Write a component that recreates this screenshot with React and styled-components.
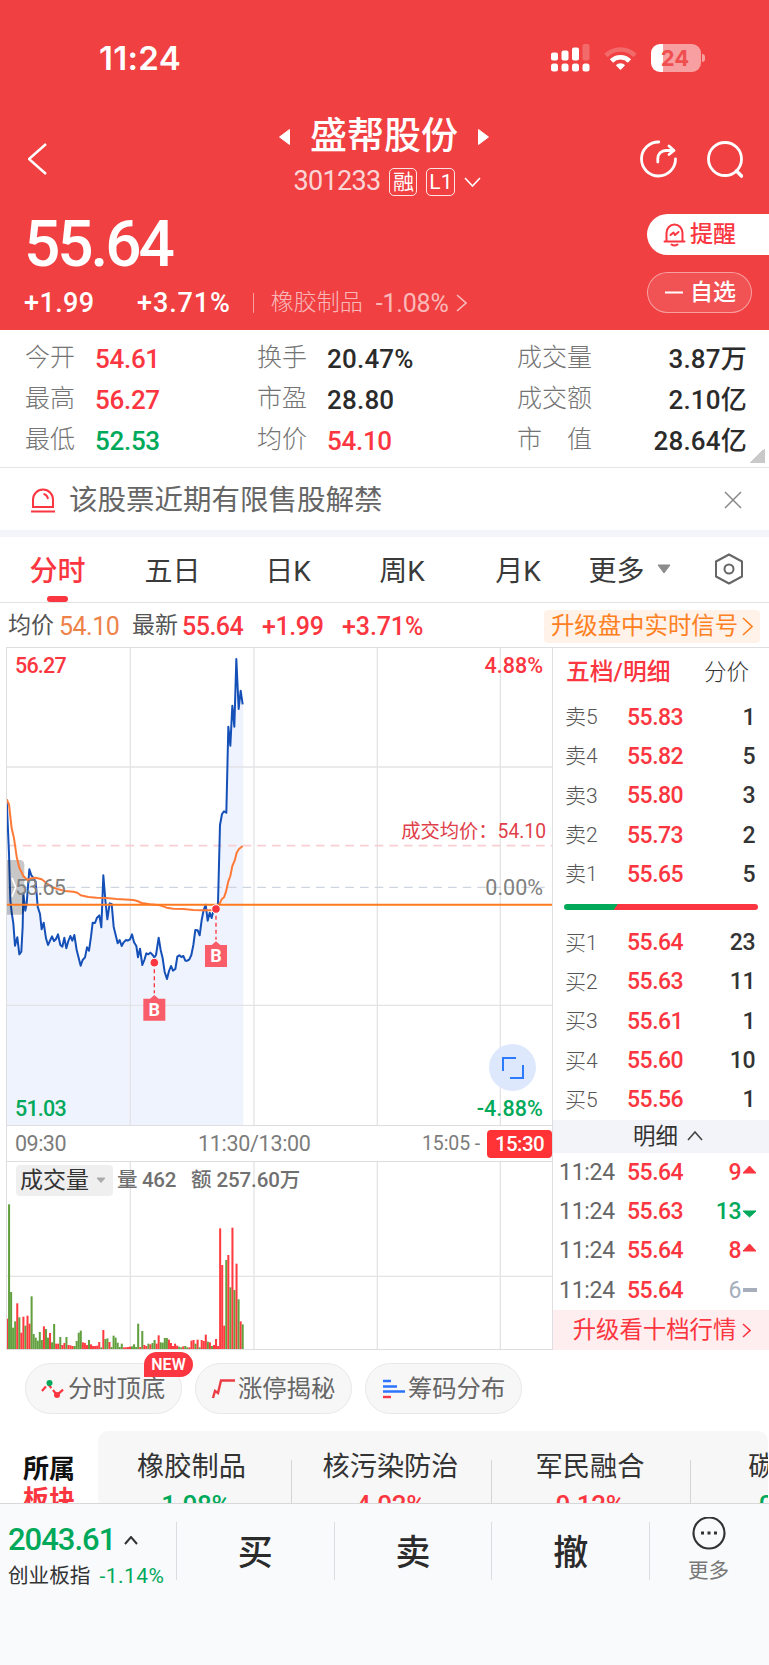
import React from "react";
import styled, { createGlobalStyle } from "styled-components";

const RED = "#fb3640";
const GREEN = "#00a95a";

const GlobalStyle = createGlobalStyle`
  * { box-sizing: border-box; }
  body {
    margin: 0;
    background: #fff;
    font-family: Roboto, "Noto Sans CJK SC", sans-serif;
    color: #333;
    overflow: hidden;
  }
  svg { display: block; flex: none; }
`;

const Page = styled.div`
  width: 769px;
  height: 1665px;
  display: flex;
  flex-direction: column;
  overflow: hidden;
`;

const Text = styled.span`
  display: block;
  flex: none;
  white-space: nowrap;
  font-size: ${(p) => p.$size || 23}px;
  line-height: ${(p) => p.$lh || Math.round((p.$size || 23) * 1.3)}px;
  font-weight: ${(p) => p.$weight || 400};
  letter-spacing: ${(p) => p.$ls || 0}px;
  color: ${(p) => p.$color || "inherit"};
  width: ${(p) => (p.$w ? p.$w + "px" : "auto")};
  text-align: ${(p) => p.$align || "left"};
`;

/* header */

const Header = styled.header`
  height: 330px;
  flex: none;
  background: #f04042;
  color: #fff;
`;

const StatusBar = styled.div`
  height: 115px;
  display: flex;
  justify-content: space-between;
  align-items: center;
  padding: 0 64px 0 99px;
`;

const Clock = styled.span`
  font-family: Inter, sans-serif;
  font-size: 33px;
  font-weight: 600;
  letter-spacing: 0.3px;
`;

const StatusIcons = styled.div`
  display: flex;
  align-items: center;
  gap: 14px;
`;

const Battery = styled.div`
  display: flex;
  align-items: center;
  justify-content: center;
  width: 50px;
  height: 28px;
  border-radius: 9px;
  background: linear-gradient(90deg, #fff 12px, rgba(255, 255, 255, 0.5) 12px);
  font-family: Inter, sans-serif;
  font-size: 22px;
  font-weight: 700;
  color: #f04f50;
  padding-right: 2px;
`;

const BatteryWrap = styled.div`
  display: flex;
  align-items: center;
  gap: 1px;
  &::after {
    content: "";
    width: 3px;
    height: 8px;
    border-radius: 0 3px 3px 0;
    background: rgba(255, 255, 255, 0.5);
  }
`;

const NavBar = styled.div`
  height: 87px;
  display: grid;
  grid-template-columns: 130px 1fr 130px;
  grid-template-rows: 87px;
  padding: 0 26px 0 28px;
  align-items: center;
`;

const Title = styled.div`
  display: flex;
  flex-direction: column;
  align-items: center;
  padding: 2px 3px 0 0;
`;

const TitleRow = styled.div`
  display: flex;
  align-items: center;
  height: 44px;
  gap: 19px;
`;

const CodeRow = styled.div`
  display: flex;
  align-items: center;
  height: 45px;
  gap: 9px;
  padding-left: 7px;
`;

const Tag = styled.span`
  display: flex;
  align-items: center;
  justify-content: center;
  width: ${(p) => p.$w}px;
  height: 28px;
  border: 1px solid rgba(255, 255, 255, 0.85);
  border-radius: 5px;
  font-size: ${(p) => p.$size}px;
  line-height: 26px;
`;

const NavActions = styled.div`
  display: flex;
  justify-content: flex-end;
  gap: 30px;
`;

const Quote = styled.div`
  display: flex;
  justify-content: space-between;
  height: 128px;
`;

const QuoteLeft = styled.div`
  padding: 8px 0 0 24px;
`;

const ChangeRow = styled.div`
  display: flex;
  align-items: center;
  height: 46px;
`;

const Separator = styled.i`
  width: 1px;
  height: 20px;
  background: rgba(255, 255, 255, 0.5);
  margin: 0 17px 0 22px;
`;

const QuoteActions = styled.div`
  display: flex;
  flex-direction: column;
  gap: 17px;
  padding-top: 12px;
`;

const RemindButton = styled.button`
  display: flex;
  align-items: center;
  width: 122px;
  height: 41px;
  padding: 0 0 0 16px;
  gap: 4px;
  border: 0;
  border-radius: 21px 0 0 21px;
  background: #fff;
  color: ${RED};
  font: 500 23px/30px Roboto, "Noto Sans CJK SC", sans-serif;
`;

const WatchButton = styled(RemindButton)`
  width: 105px;
  padding-left: 17px;
  gap: 7px;
  border: 1px solid rgba(255, 255, 255, 0.45);
  border-radius: 21px;
  background: rgba(255, 255, 255, 0.1);
  color: #fff;
`;

/* key figures */

const Stats = styled.section`
  display: grid;
  grid-template-columns: 232px 260px 1fr;
  grid-template-rows: repeat(3, 41px);
  position: relative;
  flex: none;
  height: 138px;
  padding: 8px 22px 0 25px;
  border-bottom: 1px solid #e6e6ea;
`;

const Stat = styled.div`
  display: flex;
  align-items: center;
  justify-content: ${(p) => (p.$spread ? "space-between" : "flex-start")};
`;

const StatLabel = styled.span`
  display: flex;
  justify-content: space-between;
  width: ${(p) => (p.$wide ? 75 : 70)}px;
  padding-bottom: 1px;
  font-size: 25px;
  line-height: 32px;
  font-weight: 300;
  color: #747474;
`;

const Corner = styled.i`
  position: absolute;
  right: 4px;
  bottom: 4px;
  width: 15px;
  height: 15px;
  background: linear-gradient(135deg, transparent 50%, #c9c9c9 50%);
`;

const Notice = styled.section`
  display: flex;
  align-items: center;
  flex: none;
  height: 69px;
  border-bottom: 7px solid #f3f5fa;
  padding: 2px 27px 0 31px;
  gap: 14px;
  > :last-child { margin-left: auto; }
`;

const Tabs = styled.nav`
  display: flex;
  flex: none;
  height: 66px;
  border-bottom: 1px solid #e3e3e3;
  padding-left: 8px;
`;

const Tab = styled.div`
  position: relative;
  display: flex;
  align-items: center;
  justify-content: center;
  width: ${(p) => p.$w}px;
  padding-bottom: 2px;
  gap: 12px;
  font-size: 28px;
  font-weight: ${(p) => (p.$active ? 500 : 400)};
  color: ${(p) => (p.$active ? RED : "#3a3a3a")};
  &::after {
    content: "";
    display: ${(p) => (p.$active ? "block" : "none")};
    position: absolute;
    bottom: 0;
    width: 21px;
    height: 6px;
    border-radius: 3px;
    background: ${RED};
  }
`;

const Summary = styled.div`
  display: flex;
  align-items: center;
  flex: none;
  height: 44px;
  padding: 2px 9px 0 8px;
`;

const Upgrade = styled.div`
  display: flex;
  align-items: center;
  justify-content: center;
  gap: 4px;
  margin-left: auto;
  width: 216px;
  height: 33px;
  border-radius: 4px;
  background: #fff2e8;
`;

/* chart + order book */

const Board = styled.section`
  display: flex;
  flex: none;
  height: 703px;
`;

const Charts = styled.div`
  width: 546px;
  margin-left: 6px;
  border: solid #dedee0;
  border-width: 1px 0 1px 1px;
`;

const PriceChart = styled.div`
  position: relative;
  height: 478px;
  border-bottom: 1px solid #dedee0;
`;

const ChartLabel = styled(Text)`
  position: absolute;
  top: ${(p) => p.$top}px;
  left: ${(p) => (p.$left !== undefined ? p.$left + "px" : "auto")};
  right: ${(p) => (p.$right !== undefined ? p.$right + "px" : "auto")};
`;

const ExpandButton = styled.div`
  position: absolute;
  right: 16px;
  top: 396px;
  display: grid;
  place-items: center;
  width: 47px;
  height: 47px;
  border-radius: 50%;
  background: #dee8fd;
`;

const TimeAxis = styled.div`
  display: flex;
  align-items: center;
  height: 36px;
  border-bottom: 1px solid #dedee0;
  padding-left: 8px;
  color: #7c7c7c;
`;

const TimeChip = styled.span`
  width: 65px;
  height: 28px;
  margin-left: auto;
  border-radius: 4px;
  background: #ff3236;
  color: #fff;
  font-size: 20.5px;
  line-height: 28px;
  letter-spacing: -0.6px;
  font-weight: 500;
  text-align: center;
`;

const VolumeChart = styled.div`
  position: relative;
  height: 187px;
`;

const VolumeLegend = styled.div`
  position: absolute;
  left: 9px;
  top: 3px;
  display: flex;
  align-items: center;
  color: #707070;
`;

const IndicatorSelect = styled.div`
  display: flex;
  align-items: center;
  gap: 7px;
  width: 97px;
  height: 31px;
  padding-left: 4px;
  margin-right: 4px;
  border-radius: 4px;
  background: #efefef;
`;

const Book = styled.aside`
  flex: 1;
  border: solid #dedee0;
  border-width: 1px 0 0 1px;
`;

const BookTabs = styled.div`
  display: flex;
  align-items: center;
  justify-content: space-between;
  height: 50px;
  padding: 0 20px 2px 13px;
`;

const Level = styled.div`
  display: flex;
  align-items: center;
  height: 39.3px;
  padding: 0 14px 0 12px;
  > :last-child { margin-left: auto; }
`;

const Trade = styled(Level)`
  padding: 0 12px 0 6px;
`;

const TradeVolume = styled.div`
  display: flex;
  align-items: center;
  gap: 1px;
`;

const Pressure = styled.div`
  height: 6px;
  margin: 10px 11px 13px;
  border-radius: 3px;
  background: linear-gradient(125deg, ${GREEN} 27%, ${RED} 27.3%);
`;

const Band = styled.div`
  display: flex;
  align-items: center;
  justify-content: center;
  gap: ${(p) => p.$gap}px;
  height: ${(p) => p.$h}px;
  padding-left: ${(p) => p.$shift || 0}px;
  background: ${(p) => p.$bg};
`;

/* below the chart */

const Tools = styled.section`
  display: flex;
  flex: none;
  gap: 13px;
  height: 81px;
  padding: 13px 0 0 25px;
`;

const Pill = styled.div`
  position: relative;
  display: flex;
  align-items: center;
  gap: 2px;
  width: 157px;
  height: 51px;
  padding-left: 15px;
  border: 1px solid #e8e8e8;
  border-radius: 26px;
  background: #f7f7f7;
`;

const NewBadge = styled.span`
  position: absolute;
  left: 118px;
  top: -12px;
  width: 49px;
  height: 25px;
  border-radius: 13px 13px 13px 0;
  background: ${RED};
  color: #fff;
  font-size: 16px;
  font-weight: 600;
  line-height: 26px;
  text-align: center;
`;

const Sectors = styled.section`
  display: flex;
  flex: none;
  height: 72px;
  overflow: hidden;
`;

const SectorTitle = styled.div`
  width: 98px;
  padding: 23px 0 0 23px;
`;

const SectorCard = styled.div`
  display: flex;
  width: 670px;
  height: 120px;
  overflow: hidden;
  border-radius: 10px;
  background: #f7f7f7;
`;

const Sector = styled.div`
  display: flex;
  flex-direction: column;
  align-items: center;
  flex: none;
  width: ${(p) => p.$w}px;
  padding: 18px 3px 0 0;
  background: linear-gradient(#d5d5d5, #d5d5d5) right 29px / 1px 60px no-repeat;
  &:first-child { padding-right: 7px; }
`;

const BottomBar = styled.footer`
  display: flex;
  flex: none;
  height: 163px;
  padding-top: 18px;
  border-top: 1px solid #d8d8da;
  background: #f9fafc;
`;

const IndexBox = styled.div`
  width: 176px;
  padding-left: 8px;
`;

const IndexLine = styled.div`
  display: flex;
  align-items: center;
  height: ${(p) => p.$h}px;
  gap: ${(p) => p.$gap}px;
`;

const Action = styled.div`
  display: flex;
  flex-direction: column;
  align-items: center;
  width: ${(p) => p.$w || 157.7}px;
  height: 58px;
  border-left: 1px solid #dcdde0;
  font-size: 35px;
  line-height: 64px;
  font-weight: 500;
  color: #2b2b2b;
  svg { margin-top: -5px; }
`;

const stats = [
  ["今开", "54.61", RED], ["换手", "20.47%"], ["成交量", "3.87万"],
  ["最高", "56.27", RED], ["市盈", "28.80"], ["成交额", "2.10亿"],
  ["最低", "52.53", GREEN], ["均价", "54.10", RED], ["市值", "28.64亿"],
];

const asks = [["卖5", "55.83", 1], ["卖4", "55.82", 5], ["卖3", "55.80", 3], ["卖2", "55.73", 2], ["卖1", "55.65", 5]];
const bids = [["买1", "55.64", 23], ["买2", "55.63", 11], ["买3", "55.61", 1], ["买4", "55.60", 10], ["买5", "55.56", 1]];
const trades = [["55.64", 9, "up"], ["55.63", 13, "down"], ["55.64", 8, "up"], ["55.64", 6, "flat"]];
const tradeColor = { up: RED, down: GREEN, flat: "#a5aeba" };

const sectors = [
  { name: "橡胶制品", change: "-1.08%", color: GREEN, w: 194 },
  { name: "核污染防治", change: "4.02%", color: RED, w: 200 },
  { name: "军民融合", change: "0.12%", color: RED, w: 199 },
  { name: "碳中和", change: "-0.35%", color: GREEN, w: 199 },
];

// chart coordinates are thirds of a pixel
const priceLine =
  "20,478 27,640 31,780 35,817 40,850 45,917 52,892 58,943 64,935 68,860 70,760 76,812 80,790 88,688 94,706 99,712 107,725 113,800 120,822 125,868 131,848 138,895 144,915 156,889 162,903 168,897 174,883 181,915 187,920 193,893 199,925 205,903 211,888 217,902 223,885 230,930 242,977 248,960 255,952 261,922 267,932 273,890 278,848 285,849 291,833 298,826 304,862 310,706 316,780 322,838 329,790 335,792 341,860 347,885 353,910 359,900 365,918 371,907 378,900 383,902 390,898 396,883 402,907 409,918 414,952 420,926 427,975 433,960 439,940 445,943 451,938 458,945 463,952 468,945 476,893 482,930 488,955 494,996 501,1017 507,993 513,978 519,992 526,987 532,950 538,946 544,951 550,948 556,962 562,962 568,958 574,945 580,915 586,870 593,871 599,886 605,840 611,810 617,794 623,842 629,818 635,834 641,808 648,806 654,790 660,555 666,522 672,514 679,518 685,260 691,317 697,197 703,260 709,57 716,207 722,152 728,193";
const avgLine =
  "20,478 27,493 35,565 42,595 50,650 58,683 70,708 82,720 94,715 107,713 125,718 140,730 155,741 175,748 195,753 220,755 232,758 242,766 265,771 290,773 320,774 350,777 400,780 412,783 425,789 450,793 480,796 500,803 520,806 550,807 580,810 605,811 640,811 655,800 665,778 672,772 678,755 685,724 691,708 697,678 704,662 710,638 717,627 728,618";

const volumes =
  "r91 g434 g171 g64 g83 r137 g95 r49 r97 g70 r100 r76 g158 g45 g34 g25 g51 g27 r68 g60 g34 r48 g20 g75 r16 r16 g36 r12 r18 g36 r12 r11 r9 g9 g24 g49 g55 r20 r18 r12 g27 r14 r9 r9 r10 r21 g5 r57 g30 g32 r21 g6 g40 g34 g19 g6 g16 r5 r5 r6 r7 g8 g14 g6 g76 r6 g54 r12 r9 g16 r14 g18 g27 r16 r41 g20 g19 g33 g33 r28 r18 r9 r16 r10 g7 g5 r8 g9 g5 r5 r25 r27 g16 r28 g5 r27 r24 r43 g22 r20 g9 r12 r30 r9 r362 r252 r70 g267 r282 g185 r364 g177 r256 g149 r83 g74".split(" ");

function Chevron({ dir = "right", w = 10, h = 17, color = "#fff", stroke = 1.6 }) {
  const shapes = {
    right: `M1 1L${w - 1} ${h / 2}L1 ${h - 1}`,
    left: `M${w - 1} 1L1 ${h / 2}L${w - 1} ${h - 1}`,
    down: `M1 1L${w / 2} ${h - 1}L${w - 1} 1`,
    up: `M1 ${h - 1}L${w / 2} 1L${w - 1} ${h - 1}`,
  };
  return (
    <svg width={w} height={h} fill="none" stroke={color} strokeWidth={stroke}>
      <path d={shapes[dir]} />
    </svg>
  );
}

function Triangle({ points, w, h, color }) {
  return (
    <svg width={w} height={h} fill={color} stroke={color} strokeLinejoin="round">
      <polygon points={points} />
    </svg>
  );
}

function BuyMarker({ x, y }) {
  return (
    <g>
      <line x1={x} y1={y + 20} x2={x} y2={y + 92} stroke={RED} strokeWidth="4" strokeDasharray="12 9" />
      <circle cx={x} cy={y} r="13" fill={RED} stroke="#fff" strokeWidth="3" />
      <path d={`M${x - 33} ${y + 108}h20l13-11 13 11h20v66h-66z`} fill="#f85d69" />
      <text x={x} y={y + 160} fill="#fff" fontSize="54" fontWeight="700" textAnchor="middle">B</text>
    </g>
  );
}

function PriceSvg() {
  return (
    <svg width="545" height="477" viewBox="21 24 1635 1431" fill="none">
      <polygon points={`20,1460 ${priceLine} 730,193 730,1460`} fill="#eff3fe" />
      <path d="M391 0V1460M762 0V1460M1132 0V1460M1501 0V1460M0 381H1660M0 1096H1660" stroke="#e4e4e7" strokeWidth="4" />
      <path d="M24 617H1660" stroke="#f8cfd2" strokeWidth="5" strokeDasharray="26 18" />
      <path d="M24 742H1648" stroke="#cdd6e0" strokeWidth="4" strokeDasharray="26 18" />
      <polyline points={priceLine} stroke="#1550b8" strokeWidth="6" strokeLinejoin="round" />
      <path d="M20 660H60a13 13 0 0 1 13 13V811a13 13 0 0 1-13 13H20z" fill="#000" opacity=".22" />
      <path d="M36 714L47 742L36 770" stroke="#fff" strokeWidth="5" />
      <polyline points={avgLine} stroke="#ff7a37" strokeWidth="6" strokeLinejoin="round" />
      <path d="M20 794H1660" stroke="#ff7a1e" strokeWidth="6" />
      <BuyMarker x={648} y={807} />
      <BuyMarker x={463} y={968} />
    </svg>
  );
}

function VolumeSvg() {
  return (
    <svg width="545" height="187" viewBox="21 127 1635 561" fill="none">
      <path d="M391 0V700M762 0V700M1132 0V700M1501 0V700M0 470H1660" stroke="#e4e4e7" strokeWidth="4" />
      {volumes.map((v, i) => {
        const h = Number(v.slice(1));
        return <rect key={i} x={18 + i * 6.148} y={688 - h} width="6.1" height={h} fill={v[0] === "r" ? "#ff3b3f" : "#62a03f"} />;
      })}
    </svg>
  );
}

function TradeMark({ dir }) {
  if (dir === "up") return <Triangle w={15} h={16} color={RED} points="1,8 7.5,1 14,8" />;
  if (dir === "down") return <Triangle w={15} h={16} color={GREEN} points="1,7 7.5,13 14,7" />;
  return <svg width="15" height="16"><rect x="1" y="5" width="14" height="4" fill="#a5aeba" /></svg>;
}

function LevelRow({ row }) {
  return (
    <Level>
      <Text $size={21} $w={62} $weight={300} $color="#555">{row[0]}</Text>
      <Text $size={23} $weight={500} $ls={-0.5} $color={RED}>{row[1]}</Text>
      <Text $size={23} $weight={500} $ls={-0.5}>{row[2]}</Text>
    </Level>
  );
}

export default function App() {
  return (
    <Page>
      <GlobalStyle />
      <Header>
        <StatusBar>
          <Clock>11:24</Clock>
          <StatusIcons>
            <svg width="39" height="28" fill="#fff">
              <rect x="0" y="8.500" width="7" height="8" rx="2" />
              <rect x="10.500" y="6.500" width="7" height="10" rx="2" />
              <rect x="21" y="3.500" width="7" height="13" rx="2" />
              <rect x="31.500" y="0" width="7" height="16.500" rx="2" opacity=".22" />
              <rect x="0" y="19.500" width="7" height="8" rx="2.500" />
              <rect x="10.500" y="19.500" width="7" height="8" rx="2.500" />
              <rect x="21" y="19.500" width="7" height="8" rx="2.500" />
              <rect x="31.500" y="19.500" width="7" height="8" rx="2.500" />
            </svg>
            <svg width="33" height="26" fill="none" stroke="#fff" strokeWidth="4.600">
              <path d="M2 10.500A20.500 20.500 0 0 1 31 10.500" opacity=".22" />
              <path d="M7.500 16A12.800 12.800 0 0 1 25.500 16" />
              <path d="M16.500 25L11.800 20.300A6.600 6.600 0 0 1 21.200 20.300Z" fill="#fff" stroke="none" />
            </svg>
            <BatteryWrap>
              <Battery>24</Battery>
            </BatteryWrap>
          </StatusIcons>
        </StatusBar>
        <NavBar>
          <Chevron dir="left" w={19} h={32} stroke={2.4} />
          <Title>
            <TitleRow>
              <Triangle w={13} h={18} color="#fff" points="1.500,9 11.500,1.500 11.500,16.500" />
              <Text $size={37} $lh={44} $weight={500}>盛帮股份</Text>
              <Triangle w={13} h={18} color="#fff" points="11.500,9 1.500,1.500 1.500,16.500" />
            </TitleRow>
            <CodeRow>
              <Text $size={27} $ls={-0.7} $color="rgba(255,255,255,.8)">301233</Text>
              <Tag $w={28} $size={21}>融</Tag>
              <Tag $w={29} $size={21}>L1</Tag>
              <Chevron dir="down" w={17} h={10} />
            </CodeRow>
          </Title>
          <NavActions>
            <svg width="37" height="38" fill="none" stroke="#fff" strokeWidth="2.800" strokeLinecap="round" strokeLinejoin="round">
              <path d="M18.800 2A17 17 0 1 0 35.500 19" />
              <path d="M17.800 22V18.500A8 8 0 0 1 25.800 10.500H33M29 6L34 10.500L29 14.500" />
            </svg>
            <svg width="36" height="38" fill="none" stroke="#fff" strokeWidth="2.800" strokeLinecap="round">
              <circle cx="18" cy="19" r="16.500" />
              <path d="M29.500 31L34.500 36" strokeWidth="3.600" />
            </svg>
          </NavActions>
        </NavBar>
        <Quote>
          <QuoteLeft>
            <Text $size={64} $lh={70} $weight={500} $ls={-3.1}>55.64</Text>
            <ChangeRow>
              <Text $size={27} $weight={500} $w={113} $ls={0.4}>+1.99</Text>
              <Text $size={27} $weight={500} $ls={0.9}>+3.71%</Text>
              <Separator />
              <Text $size={23} $w={105} $weight={300} $color="rgba(255,255,255,.65)">橡胶制品</Text>
              <Text $size={25} $ls={-0.2} $color="rgba(255,255,255,.65)">-1.08%</Text>
              <Text $w={7} />
              <Chevron w={11} h={18} color="rgba(255,255,255,.65)" />
            </ChangeRow>
          </QuoteLeft>
          <QuoteActions>
            <RemindButton>
              <svg width="23" height="25" fill="none" stroke={RED} strokeWidth="2" strokeLinecap="round" strokeLinejoin="round">
                <path d="M1.500 19.500H21.500M3.500 19V11A8 8.500 0 0 1 19.500 11V19M8.500 22.500Q11.500 24.500 14.500 22.500" />
                <path d="M7.500 13L10.500 10.500L12 13L15.500 10" />
              </svg>
              提醒
            </RemindButton>
            <WatchButton>
              <svg width="18" height="3" fill="#fff"><rect y=".5" width="18" height="2" /></svg>
              自选
            </WatchButton>
          </QuoteActions>
        </Quote>
      </Header>

      <Stats>
        {stats.map(([label, value, color], i) => (
          <Stat key={label} $spread={i % 3 === 2}>
            <StatLabel $wide={i % 3 === 2}>
              {label === "市值" ? label.split("").map((c) => <span key={c}>{c}</span>) : label}
            </StatLabel>
            <Text $size={26} $weight={500} $ls={color ? -0.3 : 0.2} $color={color || "#2b2b2b"}>{value}</Text>
          </Stat>
        ))}
        <Corner />
      </Stats>

      <Notice>
        <svg width="24" height="25" fill="none" stroke={RED} strokeWidth="2">
          <path d="M2 19V11.500A10 10 0 0 1 22 11.500V19ZM0 23.500H24M12.500 6A6 6 0 0 1 17 11" />
        </svg>
        <Text $size={28.500} $color="#666">该股票近期有限售股解禁</Text>
        <svg width="18" height="18" stroke="#888" strokeWidth="1.500"><path d="M1 1L17 17M17 1L1 17" /></svg>
      </Notice>

      <Tabs>
        <Tab $w={99} $active>分时</Tab>
        <Tab $w={131}>五日</Tab>
        <Tab $w={100}>日K</Tab>
        <Tab $w={128}>周K</Tab>
        <Tab $w={104}>月K</Tab>
        <Tab $w={119}>
          更多
          <Triangle w={14} h={10} color="#8c8c8c" points="1,1 13,1 7,9" />
        </Tab>
        <Tab $w={80}>
          <svg width="30" height="32" fill="none" stroke="#666" strokeWidth="2" strokeLinejoin="round">
            <path d="M15 1.500L28 8.500V23.500L15 30.500L2 23.500V8.500Z" />
            <circle cx="15" cy="16" r="4.500" />
          </svg>
        </Tab>
      </Tabs>

      <Summary>
        <Text $size={23} $w={51} $color="#555">均价</Text>
        <Text $size={25} $w={73} $ls={-0.5} $color="#ee8349">54.10</Text>
        <Text $size={23} $w={50} $color="#555">最新</Text>
        <Text $size={25} $w={80} $ls={-0.5} $weight={500} $color={RED}>55.64</Text>
        <Text $size={25} $w={80} $ls={-0.4} $weight={500} $color={RED}>+1.99</Text>
        <Text $size={25} $ls={-0.1} $weight={500} $color={RED}>+3.71%</Text>
        <Upgrade>
          <Text $size={23.400} $color="#ff801f">升级盘中实时信号</Text>
          <Chevron w={11} h={19} color="#ff801f" />
        </Upgrade>
      </Summary>

      <Board>
        <Charts>
          <PriceChart>
            <PriceSvg />
            <ChartLabel $top={4} $left={8} $size={21.500} $ls={-0.8} $weight={500} $color={RED}>56.27</ChartLabel>
            <ChartLabel $top={4} $right={9} $size={21.500} $weight={500} $color={RED}>4.88%</ChartLabel>
            <ChartLabel $top={171} $right={6} $size={19.300} $color="#e0404a">成交均价：54.10</ChartLabel>
            <ChartLabel $top={226} $left={8} $size={21.500} $ls={-0.8} $color="#808080">53.65</ChartLabel>
            <ChartLabel $top={226} $right={9} $size={21.500} $color="#808080">0.00%</ChartLabel>
            <ChartLabel $top={447} $left={8} $size={21.500} $ls={-0.8} $weight={500} $color={GREEN}>51.03</ChartLabel>
            <ChartLabel $top={447} $right={9} $size={21.500} $ls={0.1} $weight={500} $color={GREEN}>-4.88%</ChartLabel>
            <ExpandButton>
              <svg width="22" height="22" fill="none" stroke="#2c7bff" strokeWidth="2">
                <path d="M1 14V1H14M21 8V21H8" />
              </svg>
            </ExpandButton>
          </PriceChart>
          <TimeAxis>
            <Text $size={21.500} $w={183} $ls={-0.5}>09:30</Text>
            <Text $size={21.500} $w={224} $ls={-0.3}>11:30/13:00</Text>
            <Text $size={19.500} $ls={-0.1}>15:05 -</Text>
            <TimeChip>15:30</TimeChip>
          </TimeAxis>
          <VolumeChart>
            <VolumeSvg />
            <VolumeLegend>
              <IndicatorSelect>
                <Text $size={23} $color="#333">成交量</Text>
                <Triangle w={10} h={7} color="#aaa" points="1,1 9,1 5,5.500" />
              </IndicatorSelect>
              <Text $size={20.500} $weight={500} $w={74} $ls={-0.3}>量 462</Text>
              <Text $size={20.500} $weight={500} $ls={-0.1}>额 257.60万</Text>
            </VolumeLegend>
          </VolumeChart>
        </Charts>

        <Book>
          <BookTabs>
            <Text $size={23.800} $weight={500} $color={RED}>五档/明细</Text>
            <Text $size={22.500} $weight={300}>分价</Text>
          </BookTabs>
          {asks.map((row) => <LevelRow key={row[0]} row={row} />)}
          <Pressure />
          {bids.map((row) => <LevelRow key={row[0]} row={row} />)}
          <Band $h={33} $gap={9} $shift={14} $bg="#f3f4f9">
            <Text $size={22.500}>明细</Text>
            <Chevron dir="up" w={16} h={10} color="#444" />
          </Band>
          {trades.map(([price, volume, dir], i) => (
            <Trade key={i}>
              <Text $size={23} $w={68} $ls={-0.3} $color="#666">11:24</Text>
              <Text $size={23} $weight={500} $ls={-0.5} $color={RED}>{price}</Text>
              <TradeVolume>
                <Text $size={23} $weight={dir === "flat" ? 400 : 500} $ls={-0.5} $color={tradeColor[dir]}>{volume}</Text>
                <TradeMark dir={dir} />
              </TradeVolume>
            </Trade>
          ))}
          <Band $h={40} $gap={6} $shift={2} $bg="#ffeeef">
            <Text $size={23.400} $color={RED}>升级看十档行情</Text>
            <Chevron w={9} h={15} color={RED} />
          </Band>
        </Book>
      </Board>

      <Tools>
        <Pill>
          <svg width="25" height="20" fill="none" stroke={RED} strokeWidth="2.200">
            <path d="M1 12L7 5L16 16L24 9" strokeDasharray="6 2.500" />
            <circle cx="8.500" cy="4" r="3" fill={GREEN} stroke="none" />
            <circle cx="16" cy="16" r="3" fill={RED} stroke="none" />
          </svg>
          <Text $size={24.300} $color="#666">分时顶底</Text>
          <NewBadge>NEW</NewBadge>
        </Pill>
        <Pill>
          <svg width="25" height="20" fill="none" stroke="#ea3d46" strokeWidth="2.400">
            <path d="M2 19L4 12L7 14L10 1.500H24" />
          </svg>
          <Text $size={24.300} $color="#666">涨停揭秘</Text>
        </Pill>
        <Pill>
          <svg width="25" height="20" fill="none" stroke="#2c74ff" strokeWidth="2.400">
            <path d="M2 2H10M2 7.500H16M2 12.500H24" />
            <path d="M2 18H10" stroke="#f33b48" />
          </svg>
          <Text $size={24.300} $color="#666">筹码分布</Text>
        </Pill>
      </Tools>

      <Sectors>
        <SectorTitle>
          <Text $size={26} $lh={31} $weight={700} $color="#111">所属</Text>
          <Text $size={26} $lh={31} $weight={700} $color={RED}>板块</Text>
        </SectorTitle>
        <SectorCard>
          {sectors.map((s) => (
            <Sector key={s.name} $w={s.w}>
              <Text $size={27.200} $lh={36}>{s.name}</Text>
              <Text $size={26} $lh={40} $weight={500} $ls={-0.3} $color={s.color}>{s.change}</Text>
            </Sector>
          ))}
        </SectorCard>
      </Sectors>

      <BottomBar>
        <IndexBox>
          <IndexLine $h={36} $gap={9}>
            <Text $size={31} $weight={500} $ls={-1} $color={GREEN}>2043.61</Text>
            <Chevron dir="up" w={14} h={9} color="#333" stroke={2} />
          </IndexLine>
          <IndexLine $h={36} $gap={9}>
            <Text $size={20.600}>创业板指</Text>
            <Text $size={21} $ls={0.5} $color={GREEN}>-1.14%</Text>
          </IndexLine>
        </IndexBox>
        <Action>买</Action>
        <Action>卖</Action>
        <Action>撤</Action>
        <Action $w={118}>
          <svg width="34" height="34" fill="none" stroke="#333" strokeWidth="2.200">
            <circle cx="17" cy="16" r="15.500" />
            <path d="M9 16H12M15.500 16H18.500M22 16H25" strokeWidth="3" />
          </svg>
          <Text $size={20.600} $lh={40} $color="#777">更多</Text>
        </Action>
      </BottomBar>
    </Page>
  );
}
